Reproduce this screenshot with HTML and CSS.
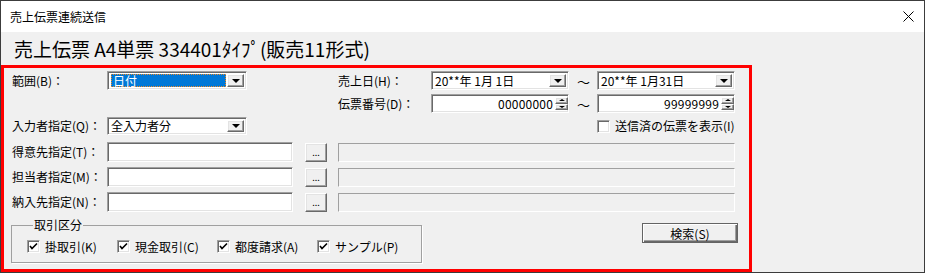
FILE: index.html
```html
<!DOCTYPE html>
<html lang="ja">
<head>
  <meta charset="UTF-8">
  <title>売上伝票連続送信</title>
  <link rel="stylesheet" href="styles.css">
</head>
<body>
  <div class="window">
    <div class="titlebar">
      <span>売上伝票連続送信</span>
      <svg class="close" width="11" height="11" viewBox="0 0 11 11">
        <path d="M0.5 0.5 L10.5 10.5 M10.5 0.5 L0.5 10.5" stroke="#000" stroke-width="1" fill="none"/>
      </svg>
    </div>

    <div class="heading">売上伝票 A4単票 334401ﾀｲﾌﾟ(販売11形式)</div>

    <div class="panel">
      <div class="filters">
        <label class="lbl">範囲(B)：</label>
        <div class="combo sunken">
          <span class="value"><span class="sel">日付</span></span>
          <span class="drop raised"><i class="down"></i></span>
        </div>
        <span></span>
        <label class="lbl">売上日(H)：</label>
        <div class="combo sunken">
          <span class="value">20**年 1月 1日</span>
          <span class="drop raised"><i class="down"></i></span>
        </div>
        <span class="tilde">～</span>
        <div class="combo sunken">
          <span class="value">20**年 1月31日</span>
          <span class="drop raised"><i class="down"></i></span>
        </div>

        <span></span><span></span><span></span>
        <label class="lbl">伝票番号(D)：</label>
        <div class="spin sunken">
          <span class="num">00000000</span>
          <span class="arrows"><span class="raised"><i class="up"></i></span><span class="raised"><i class="down small"></i></span></span>
        </div>
        <span class="tilde">～</span>
        <div class="spin sunken">
          <span class="num">99999999</span>
          <span class="arrows"><span class="raised"><i class="up"></i></span><span class="raised"><i class="down small"></i></span></span>
        </div>

        <label class="lbl">入力者指定(Q)：</label>
        <div class="combo short sunken">
          <span class="value">全入力者分</span>
          <span class="drop raised"><i class="down"></i></span>
        </div>
        <span></span><span></span><span></span><span></span>
        <label class="check">
          <span class="box sunken"></span>
          <span>送信済の伝票を表示(I)</span>
        </label>
      </div>

      <div class="refs">
        <label class="lbl">得意先指定(T)：</label>
        <div class="field sunken"></div>
        <span class="pick raised">...</span>
        <div class="name"></div>

        <label class="lbl">担当者指定(M)：</label>
        <div class="field sunken"></div>
        <span class="pick raised">...</span>
        <div class="name"></div>

        <label class="lbl">納入先指定(N)：</label>
        <div class="field sunken"></div>
        <span class="pick raised">...</span>
        <div class="name"></div>
      </div>

      <div class="bottom">
        <fieldset class="group">
          <legend>取引区分</legend>
          <label class="check item1"><span class="box sunken on"><svg width="9" height="9" viewBox="0 0 9 9"><path d="M1 4 L3 6.5 L8 1.5" stroke="#000" stroke-width="1.6" fill="none"/></svg></span><span>掛取引(K)</span></label>
          <label class="check item2"><span class="box sunken on"><svg width="9" height="9" viewBox="0 0 9 9"><path d="M1 4 L3 6.5 L8 1.5" stroke="#000" stroke-width="1.6" fill="none"/></svg></span><span>現金取引(C)</span></label>
          <label class="check item2"><span class="box sunken on"><svg width="9" height="9" viewBox="0 0 9 9"><path d="M1 4 L3 6.5 L8 1.5" stroke="#000" stroke-width="1.6" fill="none"/></svg></span><span>都度請求(A)</span></label>
          <label class="check"><span class="box sunken on"><svg width="9" height="9" viewBox="0 0 9 9"><path d="M1 4 L3 6.5 L8 1.5" stroke="#000" stroke-width="1.6" fill="none"/></svg></span><span>サンプル(P)</span></label>
        </fieldset>
        <button class="search">検索(S)</button>
      </div>
    </div>
  </div>
</body>
</html>
```

FILE: styles.css
```css
html, body {
  margin: 0;
  padding: 0;
}

body {
  font-family: "Noto Sans CJK JP", sans-serif;
  font-size: 12px;
  line-height: 1;
  color: #000;
  background: #fff;
}

.window {
  box-sizing: border-box;
  width: 925px;
  height: 273px;
  border: 1px solid #3c3c3c;
  background: #f0f0f0;
  display: flex;
  flex-direction: column;
  overflow: hidden;
}

.titlebar {
  height: 31px;
  flex: none;
  background: #fff;
  display: flex;
  align-items: center;
  justify-content: space-between;
  padding: 0 10px 0 9px;
}

.heading {
  height: 33px;
  flex: none;
  display: flex;
  align-items: center;
  padding-left: 13px;
  font-size: 19px;
}

.panel {
  box-sizing: border-box;
  width: 751px;
  flex: 1;
  border: 3px solid #ff0000;
  padding: 3px 0 0 8px;
}

/* shared 3d borders */
.sunken {
  box-sizing: border-box;
  background: #fff;
  border: 1px solid;
  border-color: #a0a0a0 #fff #fff #a0a0a0;
  box-shadow: inset 1px 1px #696969, inset -1px -1px #e3e3e3;
}

.raised {
  box-sizing: border-box;
  background: #f0f0f0;
  border: 1px solid;
  border-color: #fff #696969 #696969 #fff;
  box-shadow: inset -1px -1px #a0a0a0, inset 1px 1px #e3e3e3;
}

.lbl {
  display: flex;
  align-items: center;
  white-space: nowrap;
}

.filters {
  display: grid;
  grid-template-columns: 95px 140px 91px 93px 138px 28px 138px;
  grid-template-rows: 20px 20px 18px;
  row-gap: 3px;
}

.combo {
  display: flex;
  align-items: stretch;
  height: 19px;
  padding: 2px;
}

.combo.short {
  height: 18px;
}

.combo .value {
  flex: 1;
  display: flex;
  align-items: center;
  padding-left: 1px;
  white-space: nowrap;
}

.combo .sel {
  box-sizing: border-box;
  align-self: stretch;
  flex: 1;
  margin-right: 1px;
  display: flex;
  align-items: center;
  background: #0078d7;
  color: #fff;
  border: 1px dotted #f08a24;
  padding-left: 1px;
}

.drop {
  width: 17px;
  display: flex;
  align-items: center;
  justify-content: center;
}

.down {
  width: 0;
  height: 0;
  border-left: 4px solid transparent;
  border-right: 4px solid transparent;
  border-top: 4px solid #000;
}

.down.small {
  border-left-width: 3px;
  border-right-width: 3px;
  border-top-width: 2px;
}

.up {
  width: 0;
  height: 0;
  border-left: 3px solid transparent;
  border-right: 3px solid transparent;
  border-bottom: 2px solid #000;
}

.tilde {
  display: flex;
  align-items: center;
  padding-left: 8px;
  font-size: 13px;
}

.spin {
  display: flex;
  height: 19px;
  padding: 2px 0 2px 2px;
}

.spin .num {
  flex: 1;
  display: flex;
  align-items: center;
  justify-content: flex-end;
  padding-right: 2px;
  letter-spacing: 0.2px;
}

.arrows {
  width: 13px;
  display: flex;
  flex-direction: column;
}

.arrows .raised {
  flex: 1;
  display: flex;
  align-items: center;
  justify-content: center;
}

.check {
  display: flex;
  align-items: center;
  gap: 5px;
  white-space: nowrap;
}

.box {
  width: 13px;
  height: 13px;
  flex: none;
  display: flex;
  align-items: center;
  justify-content: center;
}

.refs {
  display: grid;
  grid-template-columns: 95px 186px 12px 22px 11px 397px;
  grid-template-rows: repeat(3, 20px);
  row-gap: 5px;
  margin-top: 7px;
}

.refs .field {
  grid-column: 2;
}

.refs .pick {
  grid-column: 4;
  display: flex;
  align-items: flex-end;
  justify-content: center;
  padding-bottom: 4px;
  font-size: 9px;
  margin-top: 1px;
}

.refs .name {
  grid-column: 6;
  box-sizing: border-box;
  margin-top: 1px;
  border: 1px solid;
  border-color: #a0a0a0 #fff #fff #a0a0a0;
}

.bottom {
  display: flex;
  align-items: flex-start;
  margin-top: 6px;
  margin-left: -1px;
}

.group {
  box-sizing: border-box;
  width: 411px;
  height: 45px;
  margin: 0;
  padding: 8px 0 0 15px;
  border: 1px solid #a0a0a0;
  box-shadow: 1px 1px #fff;
  display: flex;
  align-items: flex-start;
}

.group legend {
  padding: 0 1px;
  margin-left: 6px;
  line-height: 14px;
}

.group .item1 {
  width: 90px;
}

.group .item2 {
  width: 100px;
}

.search {
  box-sizing: border-box;
  margin: 5px 0 0 220px;
  width: 96px;
  height: 20px;
  padding: 0;
  font-family: inherit;
  font-size: 12px;
  color: #000;
  background: #f0f0f0;
  border: 1px solid #646464;
  box-shadow: inset 1px 1px #fff, inset -1px -1px #696969, inset -2px -2px #a0a0a0;
}
```
